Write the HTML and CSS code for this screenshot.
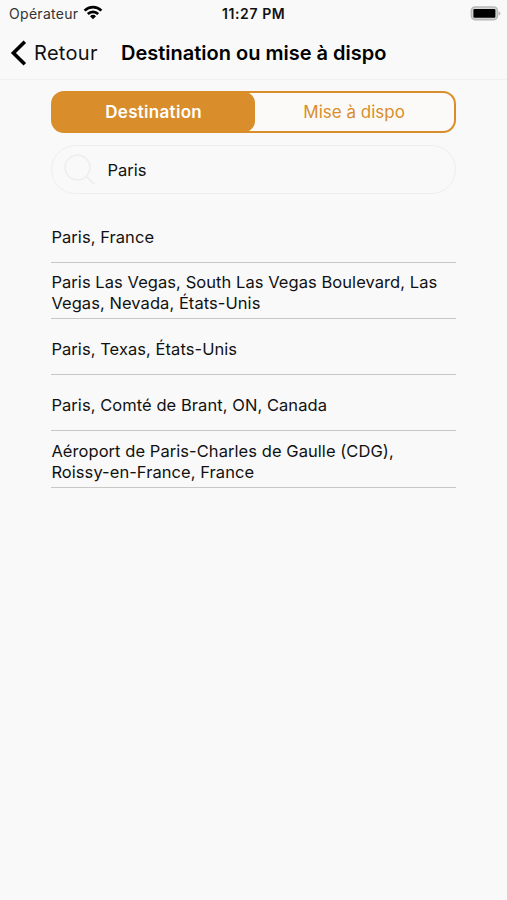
FILE: index.html
```html
<!DOCTYPE html>
<html lang="fr">
<head>
    <meta charset="UTF-8">
    <meta name="viewport" content="width=device-width, initial-scale=1.0">
    <title>Destination ou mise à dispo</title>
    <link rel="stylesheet" href="styles.css">
</head>
<body>
    <div class="status-bar">
        <div class="carrier">
            <span class="carrier-name">Opérateur</span>
            <svg class="wifi" viewBox="0 0 20 15" width="20" height="15">
                <path d="M1.6 5.6a12 12 0 0 1 16.8 0M4.8 9a7.4 7.4 0 0 1 10.4 0" fill="none" stroke="#000" stroke-width="2.6"/>
                <path d="M10 14.2l-3-3a4.3 4.3 0 0 1 6 0z"/>
            </svg>
        </div>
        <div class="clock"><span class="clock-text">11:27 PM</span></div>
        <svg class="battery" viewBox="0 0 32 15" width="32" height="15">
            <rect x="1.4" y="1" width="26" height="12.6" rx="3.6" fill="#d8d8d8" stroke="#b8b8b8" stroke-width="1.6"/>
            <rect x="3.4" y="3" width="22" height="8.8" rx="1" fill="#000"/>
            <path d="M28.6 5.2v4.4c1.3-.5 1.8-1.2 1.8-2.2s-.5-1.7-1.8-2.2z" fill="#b8b8b8"/>
        </svg>
    </div>

    <div class="navbar">
        <a class="back" href="#">
            <svg viewBox="0 0 17 26" width="17" height="26">
                <path d="M14.8 1.8L3.4 13l11.4 11.2" fill="none" stroke="#000" stroke-width="3.6"/>
            </svg>
            <span class="back-label">Retour</span>
        </a>
        <span class="title">Destination ou mise à dispo</span>
    </div>

    <div class="container">
        <div class="tabs">
            <div class="tab active"><span class="tab-label">Destination</span></div>
            <div class="tab"><span class="tab-label">Mise à dispo</span></div>
        </div>

        <div class="search">
            <svg viewBox="0 0 32 32" width="32" height="32">
                <circle cx="13.5" cy="13.5" r="12.4"/>
                <path d="M22.5 22.5l8 8"/>
            </svg>
            <span class="query">Paris</span>
        </div>

        <div class="results">
            <div class="result"><span>Paris, France</span></div>
            <div class="result"><span>Paris Las Vegas, South Las Vegas Boulevard, Las<br>Vegas, Nevada, États-Unis</span></div>
            <div class="result"><span>Paris, Texas, États-Unis</span></div>
            <div class="result"><span>Paris, Comté de Brant, ON, Canada</span></div>
            <div class="result"><span>Aéroport de Paris-Charles de Gaulle (CDG),<br>Roissy-en-France, France</span></div>
        </div>
    </div>
</body>
</html>
```
FILE: styles.css
```css
body {
    margin: 0;
    min-height: 100vh;
    font-family: 'Inter', 'Liberation Sans', sans-serif;
    background: #f9f9f9;
    color: #111;
}

.status-bar {
    display: flex;
    align-items: center;
    box-sizing: border-box;
    height: 27px;
    padding: 0 5px 0 9px;
}

.carrier {
    display: flex;
    align-items: center;
    gap: 5px;
    width: 196px;
    font-size: 14px;
    letter-spacing: 0.3px;
    color: #333;
}

.wifi {
    margin-top: -2px;
}

.clock {
    flex: 1;
    padding-left: 17px;
    font-size: 14px;
    font-weight: 600;
    letter-spacing: 0.6px;
}

.navbar {
    display: flex;
    align-items: center;
    box-sizing: border-box;
    height: 53px;
    padding: 0 10px 1px;
    border-bottom: 1px solid #f0f0f0;
    color: #000;
}

.back {
    display: flex;
    align-items: center;
    gap: 7px;
    width: 111px;
    font-size: 20px;
    letter-spacing: 0.3px;
    color: #111;
    text-decoration: none;
}

.title {
    font-size: 20px;
    font-weight: 600;
}

.container {
    width: 405px;
    margin: 11px 0 0 51.4px;
}

.tabs {
    display: flex;
    box-sizing: border-box;
    height: 42px;
    border: 2px solid #d98e2b;
    border-radius: 13px;
    background: #fbfaf8;
}

.tab {
    display: flex;
    flex: 1;
    align-items: center;
    justify-content: center;
    border-radius: 10px;
    font-size: 17px;
    color: #d98e2b;
}

.tab.active {
    background: #d98e2b;
    box-shadow: 0 0 0 1px #d98e2b;
    color: #fff;
    font-weight: 600;
    letter-spacing: 0.3px;
}

.search {
    display: flex;
    align-items: center;
    box-sizing: border-box;
    height: 49px;
    margin-top: 12px;
    padding-left: 12px;
    gap: 11px;
    border: 1px solid #eeeeee;
    border-radius: 25px;
    font-size: 16.5px;
}

.search svg {
    fill: none;
    stroke: #eeeeee;
    stroke-width: 1.6;
}

.results {
    margin-top: 12.6px;
}

.result {
    display: flex;
    align-items: center;
    box-sizing: border-box;
    height: 56.2px;
    padding-top: 6px;
    border-bottom: 1px solid #c8c8c8;
    font-size: 16.5px;
    letter-spacing: 0.06px;
    line-height: 21px;
}
```
